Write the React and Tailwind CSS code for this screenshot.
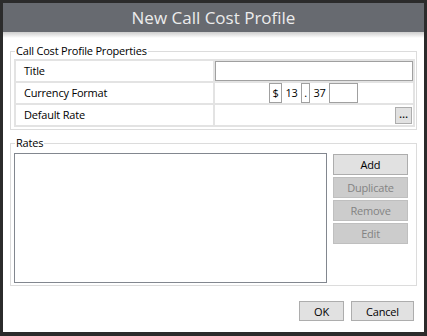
import React from 'react'

const font = { fontFamily: '"Open Sans", "Noto Sans", sans-serif' }

function Group({ title, className, children }) {
    return (
        <fieldset className={`border border-[#dcdcdc] ${className}`}>
            <legend className="ml-[1px] px-[1px] text-[11px] leading-[16px] tracking-[-0.2px] text-black">{title}</legend>
            {children}
        </fieldset>
    )
}

function SideButton({ label, disabled }) {
    return (
        <button
            className={`w-[75px] h-[21px] text-[11px] leading-none tracking-[-0.2px] border ${disabled
                ? 'bg-[#cccccc] border-[#bfbfbf] text-[#838383]'
                : 'bg-[#e1e1e1] border-[#adadad] text-black'}`}
        >
            {label}
        </button>
    )
}

export default function App() {
    return (
        <div className="w-[427px] h-[336px] bg-[#2b2b2b] pt-[3px] pl-[3px] pr-[3px] pb-[4px]" style={font}>
            <div className="flex flex-col h-full bg-white">
                {/* title bar */}
                <div className="h-[29px] shrink-0 bg-[#676a70] flex items-center justify-center text-[17px] text-[#ececec]">
                    New Call Cost Profile
                </div>
                <div className="h-[6px] shrink-0 bg-gradient-to-b from-[#cdcdcd] to-white" />

                <div className="px-[7px] pt-[5px]">
                    <Group title="Call Cost Profile Properties" className="pl-[3px] pr-[1px] pb-[2px]">
                        <div className="grid grid-cols-[197px_1fr] gap-[2px] p-[2px] bg-[#e3e3e3] text-[11px] tracking-[-0.2px] text-black">
                            <div className="h-[20px] bg-white flex items-center pl-[8px]">Title</div>
                            <div className="h-[20px] bg-white">
                                <input className="w-full h-full border border-[#a0a0a0] outline-none px-1 text-[11px]" />
                            </div>

                            <div className="h-[20px] bg-white flex items-center pl-[8px]">Currency Format</div>
                            <div className="h-[20px] bg-white flex items-stretch pl-[54px]">
                                <span className="w-[13px] border border-[#a0a0a0] flex items-center justify-center">$</span>
                                <span className="w-[19px] flex items-center justify-center">13</span>
                                <span className="w-[9px] border border-[#a0a0a0] flex items-center justify-center">.</span>
                                <span className="w-[19px] flex items-center justify-center">37</span>
                                <span className="w-[29px] border border-[#a0a0a0]" />
                            </div>

                            <div className="h-[20px] bg-white flex items-center pl-[8px]">Default Rate</div>
                            <div className="h-[20px] bg-white flex items-center justify-end">
                                <button className="w-[17px] h-[17px] mr-[1px] bg-[#e1e1e1] border border-[#adadad] text-[12px] leading-none pb-[3px]">...</button>
                            </div>
                        </div>
                    </Group>

                    <Group title="Rates" className="mt-[5px] pl-[3px] pr-[1px] pb-[2px]">
                        <div className="flex gap-[6px] pt-[2px]">
                            <div className="w-[313px] h-[130px] border border-[#82878f] bg-white" />
                            <div className="flex flex-col gap-[2px] pt-[1px]">
                                <SideButton label="Add" />
                                <SideButton label="Duplicate" disabled />
                                <SideButton label="Remove" disabled />
                                <SideButton label="Edit" disabled />
                            </div>
                        </div>
                    </Group>

                    <div className="flex justify-end gap-[7px] mt-[15px] pr-[3px]">
                        <button className="w-[45px] h-[20px] bg-[#e1e1e1] border border-[#adadad] text-[11px] leading-none tracking-[-0.2px]">OK</button>
                        <button className="w-[63px] h-[20px] bg-[#e1e1e1] border border-[#adadad] text-[11px] leading-none tracking-[-0.2px]">Cancel</button>
                    </div>
                </div>
            </div>
        </div>
    )
}
